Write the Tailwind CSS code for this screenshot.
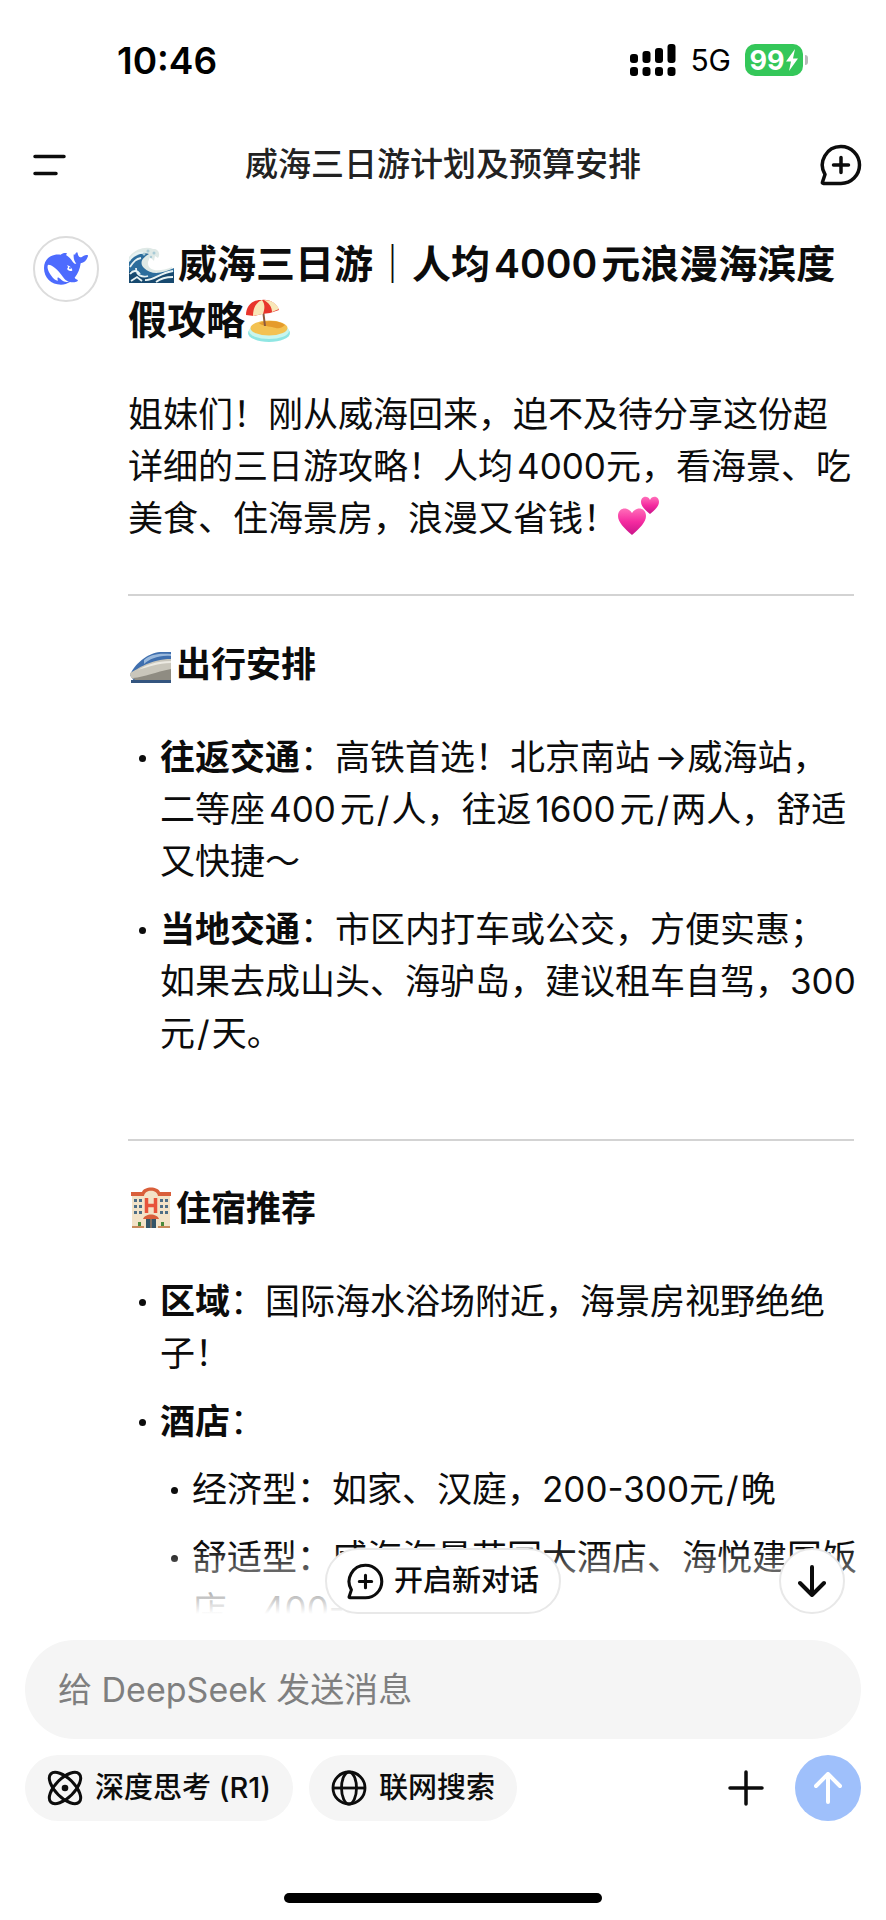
<!DOCTYPE html>
<html lang="zh-CN">
<head>
  <meta charset="UTF-8">
  <meta name="viewport" content="width=device-width, initial-scale=1.0">
  <title>威海三日游计划及预算安排</title>
  <script src="https://cdn.jsdelivr.net/npm/@tailwindcss/browser@4"></script>
</head>
<body class="h-screen flex flex-col bg-white text-[#0c0c0c] font-['Inter','Noto_Sans_CJK_SC',sans-serif] overflow-hidden">

  <!-- Status bar -->
  <div class="flex items-center justify-between h-[120px] pl-[117px] pr-[78px] shrink-0 text-black">
    <span class="text-[37px] font-semibold leading-none">10:46</span>
    <div class="flex items-center gap-[14px]">
      <svg class="w-[46px] h-8" viewBox="0 0 46 32" fill="currentColor" aria-hidden="true">
        <rect x="0" y="10" width="8" height="9" rx="3"/>
        <rect x="12.500" y="7" width="8" height="12" rx="3"/>
        <rect x="25" y="4" width="8" height="15" rx="3"/>
        <rect x="37.500" y="0" width="8" height="19" rx="3"/>
        <rect x="0" y="23" width="8" height="9" rx="3"/>
        <rect x="12.500" y="23" width="8" height="9" rx="3"/>
        <rect x="25" y="23" width="8" height="9" rx="3"/>
        <rect x="37.500" y="23" width="8" height="9" rx="3"/>
      </svg>
      <span class="text-[30px] leading-none">5G</span>
      <div class="flex items-center gap-[2px]">
        <div class="flex items-center justify-center w-[58px] h-8 rounded-[10px] bg-[#34c759] text-white">
          <span class="text-[27px] font-bold leading-none">99</span>
          <svg class="w-[14px] h-6" viewBox="0 0 14 24" fill="currentColor" aria-hidden="true"><path d="M10 1 1 13.500h5L4 23l9-12.500H8z"/></svg>
        </div>
        <div class="w-[3px] h-[10px] rounded-r-full bg-[#b9b9b9]"></div>
      </div>
    </div>
  </div>

  <!-- Header -->
  <header class="flex items-center justify-between h-[90px] px-6 shrink-0">
    <button class="flex items-center justify-end w-[42px] h-[42px]" aria-label="菜单">
      <svg class="w-[33px] h-[22px]" viewBox="0 0 33 22" fill="none" stroke="currentColor" stroke-width="3.500" stroke-linecap="round"><path d="M2 2.500h29M2 19.500h21"/></svg>
    </button>
    <h1 class="text-[33px] font-medium text-[#222]">威海三日游计划及预算安排</h1>
    <button aria-label="新对话">
      <svg class="w-[42px] h-[42px]" viewBox="0 0 42 42" fill="none" stroke="currentColor" stroke-width="3.500" stroke-linecap="round" stroke-linejoin="round">
        <path d="M21 2.500a18.500 18.500 0 1 1 0 37H3.500q-1.500 0-1-1.500l2.500-7.500A18.500 18.500 0 0 1 21 2.500z"/>
        <path d="M21 13.500v15M13.500 21h15"/>
      </svg>
    </button>
  </header>

  <!-- Conversation -->
  <main class="relative flex-1 min-h-0">
    <div class="flex items-start gap-[29px] h-full overflow-hidden pl-[33px] pr-8 pt-[26px]">
      <div class="flex items-center justify-center w-[66px] h-[66px] shrink-0 rounded-full border-2 border-[#dcdcdc]">
        <svg class="w-11 h-[34px]" viewBox="0 0 132 100" aria-hidden="true">
          <path fill="#4d6bfe" d="M0 47C0 18 24 3 50 7c4-4 11-6 17-5 3 1 1 3-1 6 9 5 15 13 20 20 5 7 8 6 11 6-6-7-9-17-8-27 1-2 3-1 4 1 1-5 4-8 6-8 2 0 2 3 3 7 1 5 5 8 10 8 6-5 11-8 18-7 3 0 2 3 1 6-3 10-11 17-21 19-2 17-8 31-18 43 1 3 6 5 9 7 2 2-1 4-4 5-6 2-13 2-19 1-8 5-17 8-27 8C21 97 0 76 0 47z"/>
          <path fill="#fff" d="M14 37c9 1 17 7 25 15 9 9 15 18 22 27 5 5 10 8 14 10-8 1-13-1-18-3-6-4-11-9-15-11-3 2-1 7 0 10-8-1-14-6-20-15C15 61 9 48 11 40c0-2 1-3 3-3zM70 39c8 2 13 8 15 14 0 4-5 3-9 2-5-1-7-4-6-7 1-2 3-3 2-5-1-1-3-2-2-4z"/>
          <circle cx="78" cy="47" r="3" fill="#4d6bfe"/>
        </svg>
      </div>

      <article class="flex-1 min-w-0 text-[35px] leading-[52px]">
        <h2 class="text-[39px] leading-[56px] font-semibold">
          <svg class="inline-block align-[-7px] w-[46px] h-10 mr-1" viewBox="0 0 46 40" role="img" aria-label="海浪">
            <path fill="#dfe9e6" d="M1 38V12C7 4 18 1 25 4c5-1 8 5 5 9l-3-2-1 5-4-4-2 5c-1 10 12 10 24 5v16z"/>
            <path fill="#2c6d9c" d="M1 17c6-8 15-10 20-8-7 4-10 9-5 14 8 8 19 5 30 0v15H1z"/>
            <path fill="#17496f" d="M1 27c5-4 8 3 14 5 10 3 20-5 31-5v11H1z"/>
            <path fill="none" stroke="#e8f3f4" stroke-width="1.800" d="M1 16c4-7 9-9 15-8M2 22c4-6 6-8 11-9M2 29c3-4 7-4 10 0M8 23c0 7 6 10 12 8M17 35c8 1 15-7 28-9M28 37c5-4 10-5 17-5M3 36l6-4 5 4"/>
            <g fill="#a9cbd6"><circle cx="20" cy="6" r="1.500"/><circle cx="26" cy="8" r="1.500"/><circle cx="16" cy="9" r="1.500"/><circle cx="23" cy="12" r="1.200"/></g>
          </svg>威海三日游｜人均<span class="mx-1">4000</span>元浪漫海滨度<br>假攻略<svg class="inline-block align-[-8px] w-[46px] h-[43px]" viewBox="0 0 46 43" role="img" aria-label="沙滩伞">
            <ellipse cx="24" cy="34" rx="21" ry="9" fill="#8fe6e3"/>
            <ellipse cx="24" cy="32" rx="20" ry="8" fill="#c9f6ee"/>
            <ellipse cx="24" cy="29" rx="18.500" ry="7.500" fill="#f3c252"/>
            <path fill="#e59b2c" d="M14 24c8-3 20-3 26 2-5 5-9 3-13 2-5-1-10-1-13-4z"/>
            <path stroke="#8d5a3d" stroke-width="2" d="m17 3 3 24"/>
            <path fill="#e8352c" d="M1 16C1 7 8 0 17 1c8-1 15 4 17 10l-9 3-8 1-8 2z"/>
            <path fill="#f8e7b8" d="M17 1C10 4 8 10 8 17l10-2c2-6 2-10-1-14zM19 1c5 3 8 7 8 12l7-3C31 4 26 1 19 1z"/>
          </svg>
        </h2>

        <p class="mt-10 whitespace-nowrap">姐妹们！刚从威海回来，迫不及待分享这份超<br>详细的三日游攻略！人均<span class="ml-1">4000</span>元，看海景、吃<br>美食、住海景房，浪漫又省钱！<svg class="inline-block align-[-5px] w-[42px] h-10" viewBox="0 0 42 40" role="img" aria-label="两颗心">
            <defs>
              <linearGradient id="pink" x2="0" y2="1"><stop stop-color="#ff6fb9"/><stop offset=".5" stop-color="#f52ba0"/><stop offset="1" stop-color="#c9148a"/></linearGradient>
            </defs>
            <path fill="url(#pink)" d="M14 39C6 32 0 26 0 20c0-9 10-10 14-3 4-7 14-6 14 3 0 6-6 12-14 19z"/>
            <path fill="url(#pink)" d="M32 18c-5-4-9-8-9-12 0-6 7-7 9-2 2-5 9-4 9 2 0 4-4 8-9 12z"/>
          </svg></p>

        <hr class="mt-[50px] border-0 h-[2px] bg-[#d3d3d3]">

        <h3 class="mt-[42px] font-semibold">
          <svg class="inline-block align-[-6px] w-[42px] h-8 ml-[2px] mr-1" viewBox="0 0 42 32" role="img" aria-label="高铁">
            <path fill="#3f6fae" d="M0 24C4 13 18 2 30 1h11v16L4 30z"/>
            <path fill="#9ab9dc" d="M14 9c6-5 12-7 27-6v2C28 4 20 8 14 13z"/>
            <path fill="#c9c6bb" d="M0 22C8 18 20 8 41 8v20H5c-4 0-5-3-5-6z"/>
            <path fill="#8f8c82" d="M3 27c12-1 22-6 38-9v11H5z"/>
            <path fill="#34557f" d="M1 29h40v3H1z"/>
            <path fill="#eceae2" d="M8 19c8-5 18-9 33-9v2c-13 0-23 4-33 7z"/>
          </svg>出行安排
        </h3>

        <ul class="mt-[41px] space-y-4">
          <li class="flex items-start gap-[14px]">
            <span class="w-[7px] h-[7px] mt-6 ml-[11px] shrink-0 rounded-full bg-current"></span>
            <p><strong class="font-semibold">往返交通</strong>：高铁首选！北京南站<span class="ml-1">→</span>威海站，二等座<span class="mx-1">400</span>元<span class="mx-[2px]">/</span>人，往返<span class="mx-1">1600</span>元<span class="mx-[2px]">/</span>两人，舒适又快捷～</p>
          </li>
          <li class="flex items-start gap-[14px]">
            <span class="w-[7px] h-[7px] mt-6 ml-[11px] shrink-0 rounded-full bg-current"></span>
            <p class="whitespace-nowrap"><strong class="font-semibold">当地交通</strong>：市区内打车或公交，方便实惠；<br>如果去成山头、海驴岛，建议租车自驾，300<br>元<span class="mx-[2px]">/</span>天。</p>
          </li>
        </ul>

        <hr class="mt-[80px] border-0 h-[2px] bg-[#d3d3d3]">

        <h3 class="mt-[41px] font-semibold">
          <svg class="inline-block align-[-8px] w-[42px] h-[42px] ml-[2px] mr-1" viewBox="0 0 42 42" role="img" aria-label="酒店">
            <path fill="#f3e3c8" d="M2 8h12c1-9 13-9 14 0h12v33H2z"/>
            <path fill="#d95f3b" d="M1 5h11c2-6 16-6 18 0h11v4H28c-1-7-13-7-14 0H1z"/>
            <path fill="none" stroke="#e8533a" stroke-width="3.500" d="M16.500 11v15M25.500 11v15M17 18.500h8"/>
            <path fill="#4e6e86" d="M4 12h3v3H4zM9 12h3v3H9zM4 18h3v3H4zM9 18h3v3H9zM4 24h3v3H4zM9 24h3v3H9zM30 12h3v3h-3zM35 12h3v3h-3zM30 18h3v3h-3zM35 18h3v3h-3zM30 24h3v3h-3zM35 24h3v3h-3z"/>
            <path fill="#d95f3b" d="M13 32c2-6 14-6 16 0z"/>
            <path fill="#345568" d="M16 32h10v9H16z"/>
            <path fill="#c98b5c" d="M2 39h12v2H2zM28 39h12v2H28zM20.500 32h1v9h-1z"/>
            <path fill="#4b8a3c" d="M8 35h3v4H8zM31 35h3v4h-3z"/>
          </svg>住宿推荐
        </h3>

        <ul class="mt-[41px] space-y-4">
          <li class="flex items-start gap-[14px]">
            <span class="w-[7px] h-[7px] mt-6 ml-[11px] shrink-0 rounded-full bg-current"></span>
            <p><strong class="font-semibold">区域</strong>：国际海水浴场附近，海景房视野绝绝<br>子！</p>
          </li>
          <li class="flex items-start gap-[14px]">
            <span class="w-[7px] h-[7px] mt-6 ml-[11px] shrink-0 rounded-full bg-current"></span>
            <div>
              <p><strong class="font-semibold">酒店</strong>：</p>
              <ul class="mt-4 space-y-4">
                <li class="flex items-start gap-[14px]">
                  <span class="w-[7px] h-[7px] mt-6 ml-[11px] shrink-0 rounded-full bg-current"></span>
                  <p>经济型：如家、汉庭，200-300元<span class="mx-[2px]">/</span>晚</p>
                </li>
                <li class="flex items-start gap-[14px]">
                  <span class="w-[7px] h-[7px] mt-6 ml-[11px] shrink-0 rounded-full bg-current"></span>
                  <p class="whitespace-nowrap">舒适型：威海海景花园大酒店、海悦建国饭<br>店，400-600元<span class="mx-[2px]">/</span>晚</p>
                </li>
              </ul>
            </div>
          </li>
        </ul>
      </article>
    </div>

    <!-- Fade and floating buttons over the text -->
    <div class="absolute inset-x-0 bottom-0 h-[68px] bg-linear-to-t from-white to-white/0"></div>
    <button class="absolute bottom-0 left-1/2 -translate-x-1/2 flex items-center gap-[10px] h-[66px] px-5 rounded-full border-2 border-[#e8e8e8] bg-white text-[29px] font-medium whitespace-nowrap">
      <svg class="w-[37px] h-[37px]" viewBox="0 0 42 42" fill="none" stroke="currentColor" stroke-width="3.500" stroke-linecap="round" stroke-linejoin="round" aria-hidden="true">
        <path d="M21 2.500a18.500 18.500 0 1 1 0 37H3.500q-1.500 0-1-1.500l2.500-7.500A18.500 18.500 0 0 1 21 2.500z"/>
        <path d="M21 14v14M14 21h14"/>
      </svg>
      开启新对话
    </button>
    <button class="absolute bottom-0 right-[41px] flex items-center justify-center w-[66px] h-[66px] rounded-full border-2 border-[#e8e8e8] bg-white" aria-label="滚动到底部">
      <svg class="w-7 h-8" viewBox="0 0 28 32" fill="none" stroke="currentColor" stroke-width="4" stroke-linecap="round" stroke-linejoin="round"><path d="M14 2v28M2 18l12 12 12-12"/></svg>
    </button>
  </main>

  <!-- Composer -->
  <footer class="shrink-0 px-[25px] pt-[26px]">
    <input type="text" aria-label="消息" placeholder="给 DeepSeek 发送消息" class="block w-full h-[99px] px-[33px] rounded-full bg-[#f5f5f5] text-[34px] placeholder:text-[#7f7f7f] outline-none">
    <div class="flex items-center gap-4 mt-4">
      <button class="flex items-center gap-3 h-[66px] px-[22px] rounded-full bg-[#f5f5f5] text-[29px] font-medium whitespace-nowrap">
        <svg class="w-[36px] h-[36px]" viewBox="-1 -1 36 36" fill="none" stroke="currentColor" stroke-width="3" aria-hidden="true">
          <ellipse cx="17" cy="17" rx="20" ry="9.500" transform="rotate(45 17 17)"/>
          <ellipse cx="17" cy="17" rx="20" ry="9.500" transform="rotate(-45 17 17)"/>
          <circle cx="17" cy="17" r="3.300" fill="currentColor" stroke="none"/>
        </svg>
        深度思考 (R1)
      </button>
      <button class="flex items-center gap-3 h-[66px] px-[22px] rounded-full bg-[#f5f5f5] text-[29px] font-medium whitespace-nowrap">
        <svg class="w-9 h-9" viewBox="0 0 36 36" fill="none" stroke="currentColor" stroke-width="2.800" aria-hidden="true">
          <circle cx="18" cy="18" r="16"/>
          <ellipse cx="18" cy="18" rx="7.500" ry="16"/>
          <path d="M2 18h32"/>
        </svg>
        联网搜索
      </button>
      <button class="ml-auto mr-[15px]" aria-label="添加附件">
        <svg class="w-9 h-9" viewBox="0 0 36 36" fill="none" stroke="currentColor" stroke-width="3.500" stroke-linecap="round"><path d="M18 2v32M2 18h32"/></svg>
      </button>
      <button class="flex items-center justify-center w-[66px] h-[66px] rounded-full bg-[#9fc0fb] text-white" aria-label="发送">
        <svg class="w-7 h-8" viewBox="0 0 28 32" fill="none" stroke="currentColor" stroke-width="4" stroke-linecap="round" stroke-linejoin="round"><path d="M14 30V2M2 14 14 2l12 12"/></svg>
      </button>
    </div>
    <!-- Home indicator -->
    <div class="w-[318px] h-[10px] mx-auto mt-[72px] mb-[17px] rounded-full bg-black"></div>
  </footer>

</body>
</html>
